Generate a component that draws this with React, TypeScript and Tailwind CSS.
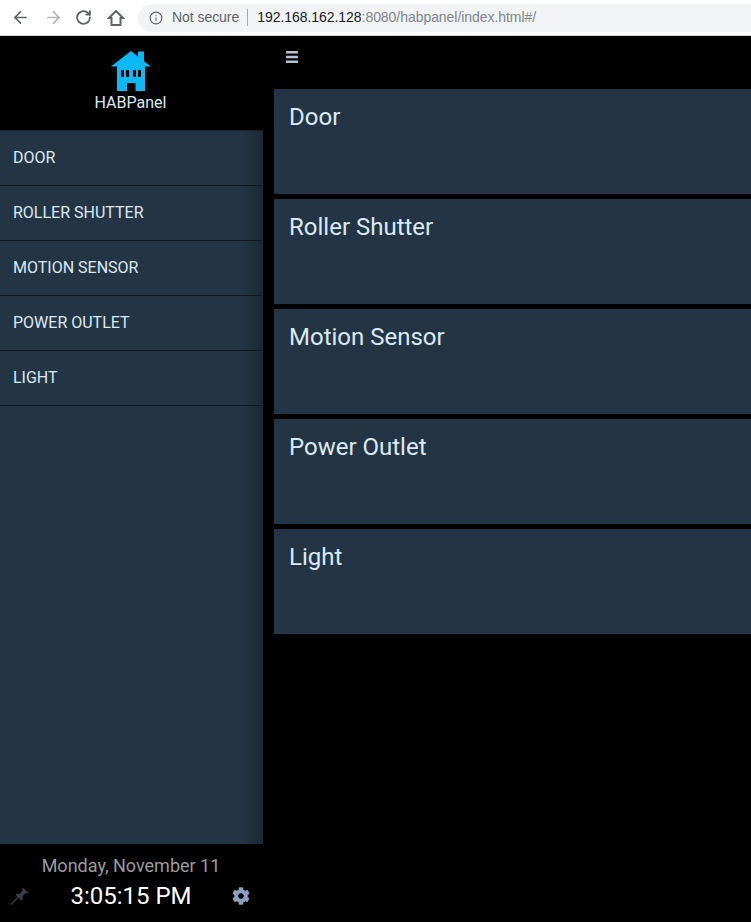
import { ArrowLeft, ArrowRight, RotateCw, Info } from 'lucide-react';
import { FaCog } from 'react-icons/fa';

const menuItems = ['DOOR', 'ROLLER SHUTTER', 'MOTION SENSOR', 'POWER OUTLET', 'LIGHT'];
const dashboards = ['Door', 'Roller Shutter', 'Motion Sensor', 'Power Outlet', 'Light'];

function HouseLogo() {
  return (
    <svg width="40" height="40" viewBox="0 0 40 40" className="block">
      <path
        fill="#0db9f5"
        fillRule="evenodd"
        d="M20 0 L27 5.4 V0.5 H33 V10.2 L40 15.5 H34 V40 H6 V15.5 H0 Z M10 19 V26 H13 V19 Z M15 19 V26 H18 V19 Z M22 19 V26 H25 V19 Z M27 19 V26 H30 V19 Z M16 32 V40 H24.5 V32 Z"
      />
    </svg>
  );
}

function ChromeHome() {
  return (
    <svg width="18" height="18" viewBox="0 0 18 18" fill="none" stroke="#5f6368" strokeWidth="2" className="ml-[15px]">
      <path d="M9 2 L16 9 H13.5 V16 H4.5 V9 H2 Z" strokeLinejoin="miter" />
    </svg>
  );
}

function PinIcon() {
  return (
    <svg width="20" height="20" viewBox="0 0 20 20" fill="#353d46">
      <path d="M12.5 1.5 L18.5 6.5 L17 7.5 L15.5 7 L12.5 10.5 L13 13.5 L11.5 14.5 L5.5 9 L7 7.5 L9.5 8 L12.5 4.5 L12 3 Z" />
      <path d="M8 11 L1 18.5" stroke="#353d46" strokeWidth="1.2" />
    </svg>
  );
}

function Hamburger() {
  return (
    <svg width="12" height="12" viewBox="0 0 12 12" fill="#b6c4d2" className="block">
      <rect x="0" y="0" width="12" height="2.5" rx="0.4" />
      <rect x="0" y="4.75" width="12" height="2.5" rx="0.4" />
      <rect x="0" y="9.5" width="12" height="2.5" rx="0.4" />
    </svg>
  );
}

export default function App() {
  return (
    <div className="h-[922px] w-[751px] overflow-hidden bg-black font-['Roboto',sans-serif]">
      {/* browser bar */}
      <div className="flex h-[36px] items-center border-b border-[#d0d0d0] bg-white pl-[11px]">
        <ArrowLeft className="h-[19px] w-[19px] text-[#5f6368]" strokeWidth={2.2} />
        <ArrowRight className="ml-[14px] h-[19px] w-[19px] text-[#b4b6b9]" strokeWidth={2.2} />
        <RotateCw className="ml-[12px] h-[17px] w-[17px] text-[#5f6368]" strokeWidth={2.6} />
        <ChromeHome />
        <div className="ml-[13px] flex h-[28px] flex-1 items-center rounded-l-full bg-[#f1f3f4] pl-[11px] text-[14px] font-['Liberation_Sans',sans-serif]">
          <Info className="h-[14px] w-[14px] text-[#5f6368]" strokeWidth={2} />
          <span className="ml-[9px] text-[#5f6368] tracking-[-0.05px]">Not secure</span>
          <span className="ml-[8px] h-[17px] w-px bg-[#a8abae]" />
          <span className="ml-[9px] text-[#202124] tracking-[-0.05px]">192.168.162.128</span>
          <span className="text-[#80868b] tracking-[-0.05px]">:8080/habpanel/index.html#/</span>
        </div>
      </div>

      <div className="flex h-[886px]">
        {/* sidebar */}
        <aside className="flex w-[263px] shrink-0 flex-col bg-black">
          <div className="flex h-[94px] flex-col items-center pr-[2px] pt-[15px]">
            <HouseLogo />
            <span className="mt-[3px] text-[16px] leading-[18px] text-[#dbe9f4]">HABPanel</span>
          </div>
          <nav className="flex flex-1 flex-col bg-[linear-gradient(to_right,#233544_92%,#1b2833_100%)]">
            <div className="h-px bg-[#14202b]" />
            {menuItems.map((item) => (
              <div
                key={item}
                className="flex h-[55px] items-center border-b border-[#0f1820] pl-[13px] text-[16px] text-[#dbe9f4]"
              >
                {item}
              </div>
            ))}
          </nav>
          <div className="flex h-[78px] flex-col items-center">
            <span className="mt-[11px] pr-[1px] text-[18px] leading-[22px] text-[#9b9b9b]">Monday, November 11</span>
            <div className="mt-[1px] flex w-full items-center justify-between pl-[10px] pr-[13px]">
              <PinIcon />
              <span className="text-[24px] leading-[36px] text-white">3:05:15 PM</span>
              <FaCog className="h-[18px] w-[18px] text-[#8aa1bd]" />
            </div>
          </div>
        </aside>

        {/* main */}
        <main className="flex-1 pl-[11px]">
          <div className="h-[53px] pl-[12px] pt-[15px]">
            <Hamburger />
          </div>
          <div className="flex flex-col gap-[5px]">
            {dashboards.map((name) => (
              <div key={name} className="h-[105px] bg-[#233544] pl-[15px] pt-[12px]">
                <h2 className="text-[24px] leading-[32px] text-[#dbe9f4]">{name}</h2>
              </div>
            ))}
          </div>
        </main>
      </div>
    </div>
  );
}
